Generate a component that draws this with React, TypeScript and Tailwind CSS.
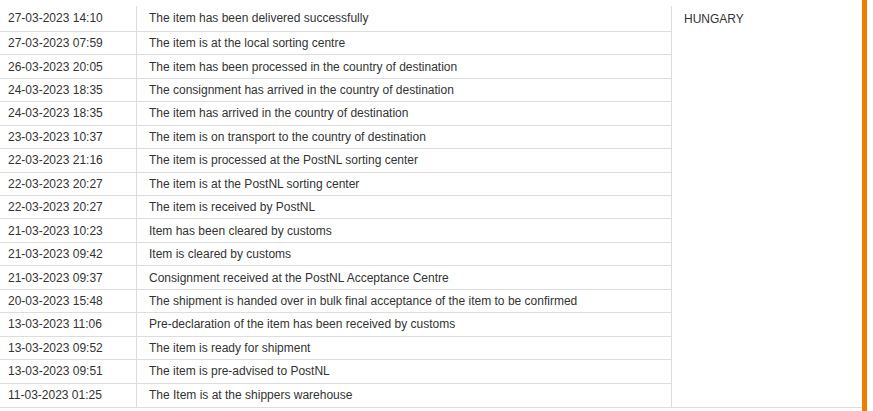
import React from "react";

const rows: [string, string][] = [
  ["27-03-2023 14:10", "The item has been delivered successfully"],
  ["27-03-2023 07:59", "The item is at the local sorting centre"],
  ["26-03-2023 20:05", "The item has been processed in the country of destination"],
  ["24-03-2023 18:35", "The consignment has arrived in the country of destination"],
  ["24-03-2023 18:35", "The item has arrived in the country of destination"],
  ["23-03-2023 10:37", "The item is on transport to the country of destination"],
  ["22-03-2023 21:16", "The item is processed at the PostNL sorting center"],
  ["22-03-2023 20:27", "The item is at the PostNL sorting center"],
  ["22-03-2023 20:27", "The item is received by PostNL"],
  ["21-03-2023 10:23", "Item has been cleared by customs"],
  ["21-03-2023 09:42", "Item is cleared by customs"],
  ["21-03-2023 09:37", "Consignment received at the PostNL Acceptance Centre"],
  ["20-03-2023 15:48", "The shipment is handed over in bulk final acceptance of the item to be confirmed"],
  ["13-03-2023 11:06", "Pre-declaration of the item has been received by customs"],
  ["13-03-2023 09:52", "The item is ready for shipment"],
  ["13-03-2023 09:51", "The item is pre-advised to PostNL"],
  ["11-03-2023 01:25", "The Item is at the shippers warehouse"],
];

export default function App() {
  return (
    <div
      className="flex h-[411px] w-[873px] bg-white text-[12px] text-[#333]"
      style={{ fontFamily: '"Liberation Sans", Arial, sans-serif' }}
    >
      <div className="flex h-[408px] w-[862px] border-b border-[#ddd]">
        <div className="flex w-[672px] flex-col">
          {rows.map(([d, t], i) => (
            <div
              key={i}
              className={
                i === 0
                  ? "flex h-[32px] border-b border-[#ddd] pt-[6px]"
                  : i === rows.length - 1
                  ? "flex h-[23.5px]"
                  : "flex h-[23.5px] border-b border-[#ddd]"
              }
            >
              <div className="flex w-[137px] items-center border-r border-[#ddd] pl-2 leading-none">
                {d}
              </div>
              <div className="flex w-[535px] items-center border-r border-[#ddd] pl-3 leading-none">
                {t}
              </div>
            </div>
          ))}
        </div>
        <div className="w-[190px] pl-3 pt-[13px] leading-none">HUNGARY</div>
      </div>
      <div className="h-[411px] w-[5px] bg-[#f07d00]" />
    </div>
  );
}
